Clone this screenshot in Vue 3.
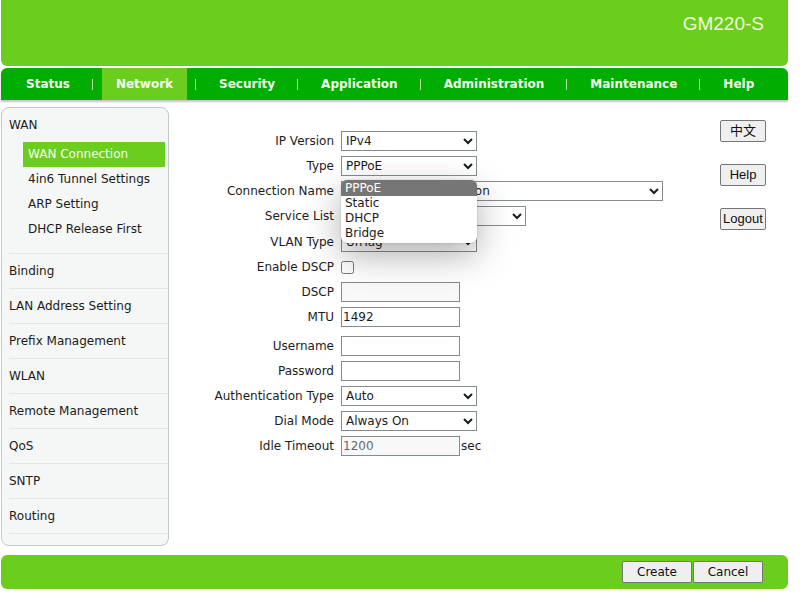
<script setup>
import { ref } from 'vue'

const tabs = ['Status', 'Network', 'Security', 'Application', 'Administration', 'Maintenance', 'Help']
const activeTab = ref('Network')

const wanPages = ['WAN Connection', '4in6 Tunnel Settings', 'ARP Setting', 'DHCP Release First']
const activePage = ref('WAN Connection')
const sections = ['Binding', 'LAN Address Setting', 'Prefix Management', 'WLAN', 'Remote Management', 'QoS', 'SNTP', 'Routing']

const types = ['PPPoE', 'Static', 'DHCP', 'Bridge']
const type = ref('PPPoE')
const typeOpen = ref(true)

const mtu = ref('1492')
const username = ref('')
const password = ref('')
const idle = ref('1200')
const dscpEnabled = ref(false)

function pickType(value) {
  type.value = value
  typeOpen.value = false
}
</script>

<template>
  <div class="page">
    <header class="banner"><span class="model">GM220-S</span></header>

    <nav class="tabs">
      <template v-for="(tab, i) in tabs" :key="tab">
        <span v-if="i" class="sep"></span>
        <a href="#" class="tab" :class="{ active: tab === activeTab }" @click.prevent="activeTab = tab">{{ tab }}</a>
      </template>
    </nav>

    <div class="body">
      <aside class="side">
        <div class="wan">
          <a href="#" class="head">WAN</a>
          <a
            v-for="page in wanPages"
            :key="page"
            href="#"
            class="sub"
            :class="{ active: page === activePage }"
            @click.prevent="activePage = page"
          >{{ page }}</a>
        </div>
        <a v-for="s in sections" :key="s" href="#" class="section">{{ s }}</a>
      </aside>

      <form class="form" @submit.prevent>
        <div class="group">
          <div class="row">
            <label for="ipv">IP Version</label>
            <select id="ipv" class="mid"><option>IPv4</option></select>
          </div>
          <div class="row">
            <label for="type">Type</label>
            <div class="combo">
              <select id="type" v-model="type" class="mid">
                <option v-for="t in types" :key="t">{{ t }}</option>
              </select>
              <ul v-if="typeOpen" class="menu" role="listbox" aria-label="Type">
                <li
                  v-for="t in types"
                  :key="t"
                  role="option"
                  :aria-selected="t === type"
                  :class="{ picked: t === type }"
                  @click="pickType(t)"
                >{{ t }}</li>
              </ul>
            </div>
          </div>
          <div class="row">
            <label for="conn">Connection Name</label>
            <select id="conn" class="wide"><option>Create WAN Connection</option></select>
          </div>
          <div class="row">
            <label for="service">Service List</label>
            <select id="service" class="service"><option>INTERNET</option></select>
          </div>
        </div>

        <div class="group">
          <div class="row">
            <label for="vlan">VLAN Type</label>
            <select id="vlan" class="mid"><option>UnTag</option></select>
          </div>
          <div class="row">
            <label for="endscp">Enable DSCP</label>
            <input id="endscp" v-model="dscpEnabled" type="checkbox" />
          </div>
          <div class="row">
            <label for="dscp">DSCP</label>
            <input id="dscp" type="text" class="text" :disabled="!dscpEnabled" />
          </div>
          <div class="row">
            <label for="mtu">MTU</label>
            <input id="mtu" v-model="mtu" type="text" class="text" />
          </div>
        </div>

        <div class="group login">
          <div class="row">
            <label for="user">Username</label>
            <input id="user" v-model="username" type="text" class="text" />
          </div>
          <div class="row">
            <label for="pass">Password</label>
            <input id="pass" v-model="password" type="password" class="text" />
          </div>
          <div class="row">
            <label for="auth">Authentication Type</label>
            <select id="auth" class="mid"><option>Auto</option></select>
          </div>
          <div class="row">
            <label for="dial">Dial Mode</label>
            <select id="dial" class="mid"><option>Always On</option></select>
          </div>
          <div class="row">
            <label for="idle">Idle Timeout</label>
            <div class="unit"><input id="idle" v-model="idle" type="text" class="text" disabled />sec</div>
          </div>
        </div>
      </form>

      <div class="tools">
        <button type="button" lang="zh">中文</button>
        <button type="button">Help</button>
        <button type="button">Logout</button>
      </div>
    </div>

    <footer class="footer">
      <button type="button">Create</button>
      <button type="button">Cancel</button>
    </footer>
  </div>
</template>

<style>
body {
  background: #fff;
}
</style>

<style scoped>
* {
  box-sizing: border-box;
}
.page {
  margin: 0 12px 0 1px;
  font: 12px/20px "DejaVu Sans", "Noto Sans CJK SC", sans-serif;
  color: #1c1c1c;
}
a {
  color: inherit;
  text-decoration: none;
}
.banner {
  display: flex;
  justify-content: flex-end;
  height: 66px;
  padding: 12px 24px;
  border-radius: 0 0 6px 6px;
  background: #6bce1f;
}
.model {
  font: 19px/24px "Liberation Sans", sans-serif;
  color: #f0fad8;
}
.tabs {
  display: flex;
  align-items: center;
  height: 32px;
  margin-top: 2px;
  padding-left: 11px;
  border-radius: 6px 6px 0 0;
  background: #00ad00;
  box-shadow: 0 2px 2px #c8c4c8;
  font-weight: 700;
  color: #f4fff0;
}
.tab {
  padding: 0 14px;
  line-height: 32px;
}
.tab.active {
  background: #6bce1f;
}
.sep {
  width: 1px;
  height: 11px;
  margin: 0 9px 0 8px;
  background: #b4e8a0;
}
.body {
  display: flex;
  align-items: flex-start;
  margin-top: 7px;
}
.side {
  flex: none;
  width: 168px;
  padding: 0 0 11px 7px;
  border: 1px solid #c0c8c8;
  border-radius: 8px;
  background: #f4f7f5;
}
.wan {
  display: flex;
  flex-direction: column;
  padding: 7px 3px 11px 0;
  border-bottom: 1px solid #e2e6e4;
}
.head {
  margin-bottom: 7px;
}
.sub {
  margin-left: 14px;
  padding-left: 5px;
  line-height: 25px;
}
.sub.active {
  background: #6bce1f;
  color: #f4ffe8;
}
.section {
  display: block;
  line-height: 34px;
  border-bottom: 1px solid #e2e6e4;
}
.form {
  flex: 1;
  min-width: 0;
  display: flex;
  flex-direction: column;
  gap: 6px;
  padding-top: 24px;
}
.group {
  display: flex;
  flex-direction: column;
  gap: 5px;
}
.login {
  padding-top: 3px;
}
.row {
  display: grid;
  grid-template-columns: 165px 1fr;
  column-gap: 7px;
  align-items: center;
  height: 20px;
}
.row label {
  text-align: right;
  white-space: nowrap;
}
select,
.text {
  height: 20px;
  margin: 0;
  border: 1px solid #858c90;
  border-radius: 0;
  background-color: #fff;
  color: #1c1c1c;
  font: inherit;
}
.text {
  width: 119px;
  padding: 0 1px;
}
.text:disabled {
  background: #f8f8f8;
  color: #686868;
}
.mid {
  width: 136px;
}
.wide {
  width: 322px;
}
.service {
  width: 185px;
}
input[type="checkbox"] {
  width: 13px;
  height: 13px;
  margin: 0;
}
.unit {
  display: flex;
  align-items: center;
  gap: 1px;
}
.combo {
  position: relative;
  display: flex;
}
.menu {
  position: absolute;
  z-index: 1;
  top: 24px;
  left: 0;
  width: 136px;
  margin: 0;
  padding: 0 0 2px;
  overflow: hidden;
  list-style: none;
  background: #fff;
  border-radius: 6px;
  box-shadow: 0 0 1px rgba(0, 0, 0, 0.6), 0 12px 36px rgba(0, 0, 0, 0.32);
}
.menu li {
  padding-left: 4px;
  line-height: 15px;
  cursor: default;
}
.menu .picked {
  line-height: 16px;
  background: #767676;
  color: #fff;
}
.tools {
  flex: none;
  display: flex;
  flex-direction: column;
  gap: 22px;
  width: 46px;
  margin: 13px 22px 0 0;
}
button {
  padding: 0;
  border: 1px solid #767676;
  border-radius: 2px;
  background: #efefef;
  color: #101010;
}
.tools button {
  height: 22px;
  font: 13px/20px "Liberation Sans", "Noto Sans CJK SC", sans-serif;
}
.footer {
  display: flex;
  justify-content: flex-end;
  gap: 1px;
  margin-top: 9px;
  padding: 6px 25px;
  border-radius: 6px;
  background: #6bce1f;
}
.footer button {
  width: 70px;
  height: 22px;
  font: 12px/20px "DejaVu Sans", sans-serif;
}
</style>
